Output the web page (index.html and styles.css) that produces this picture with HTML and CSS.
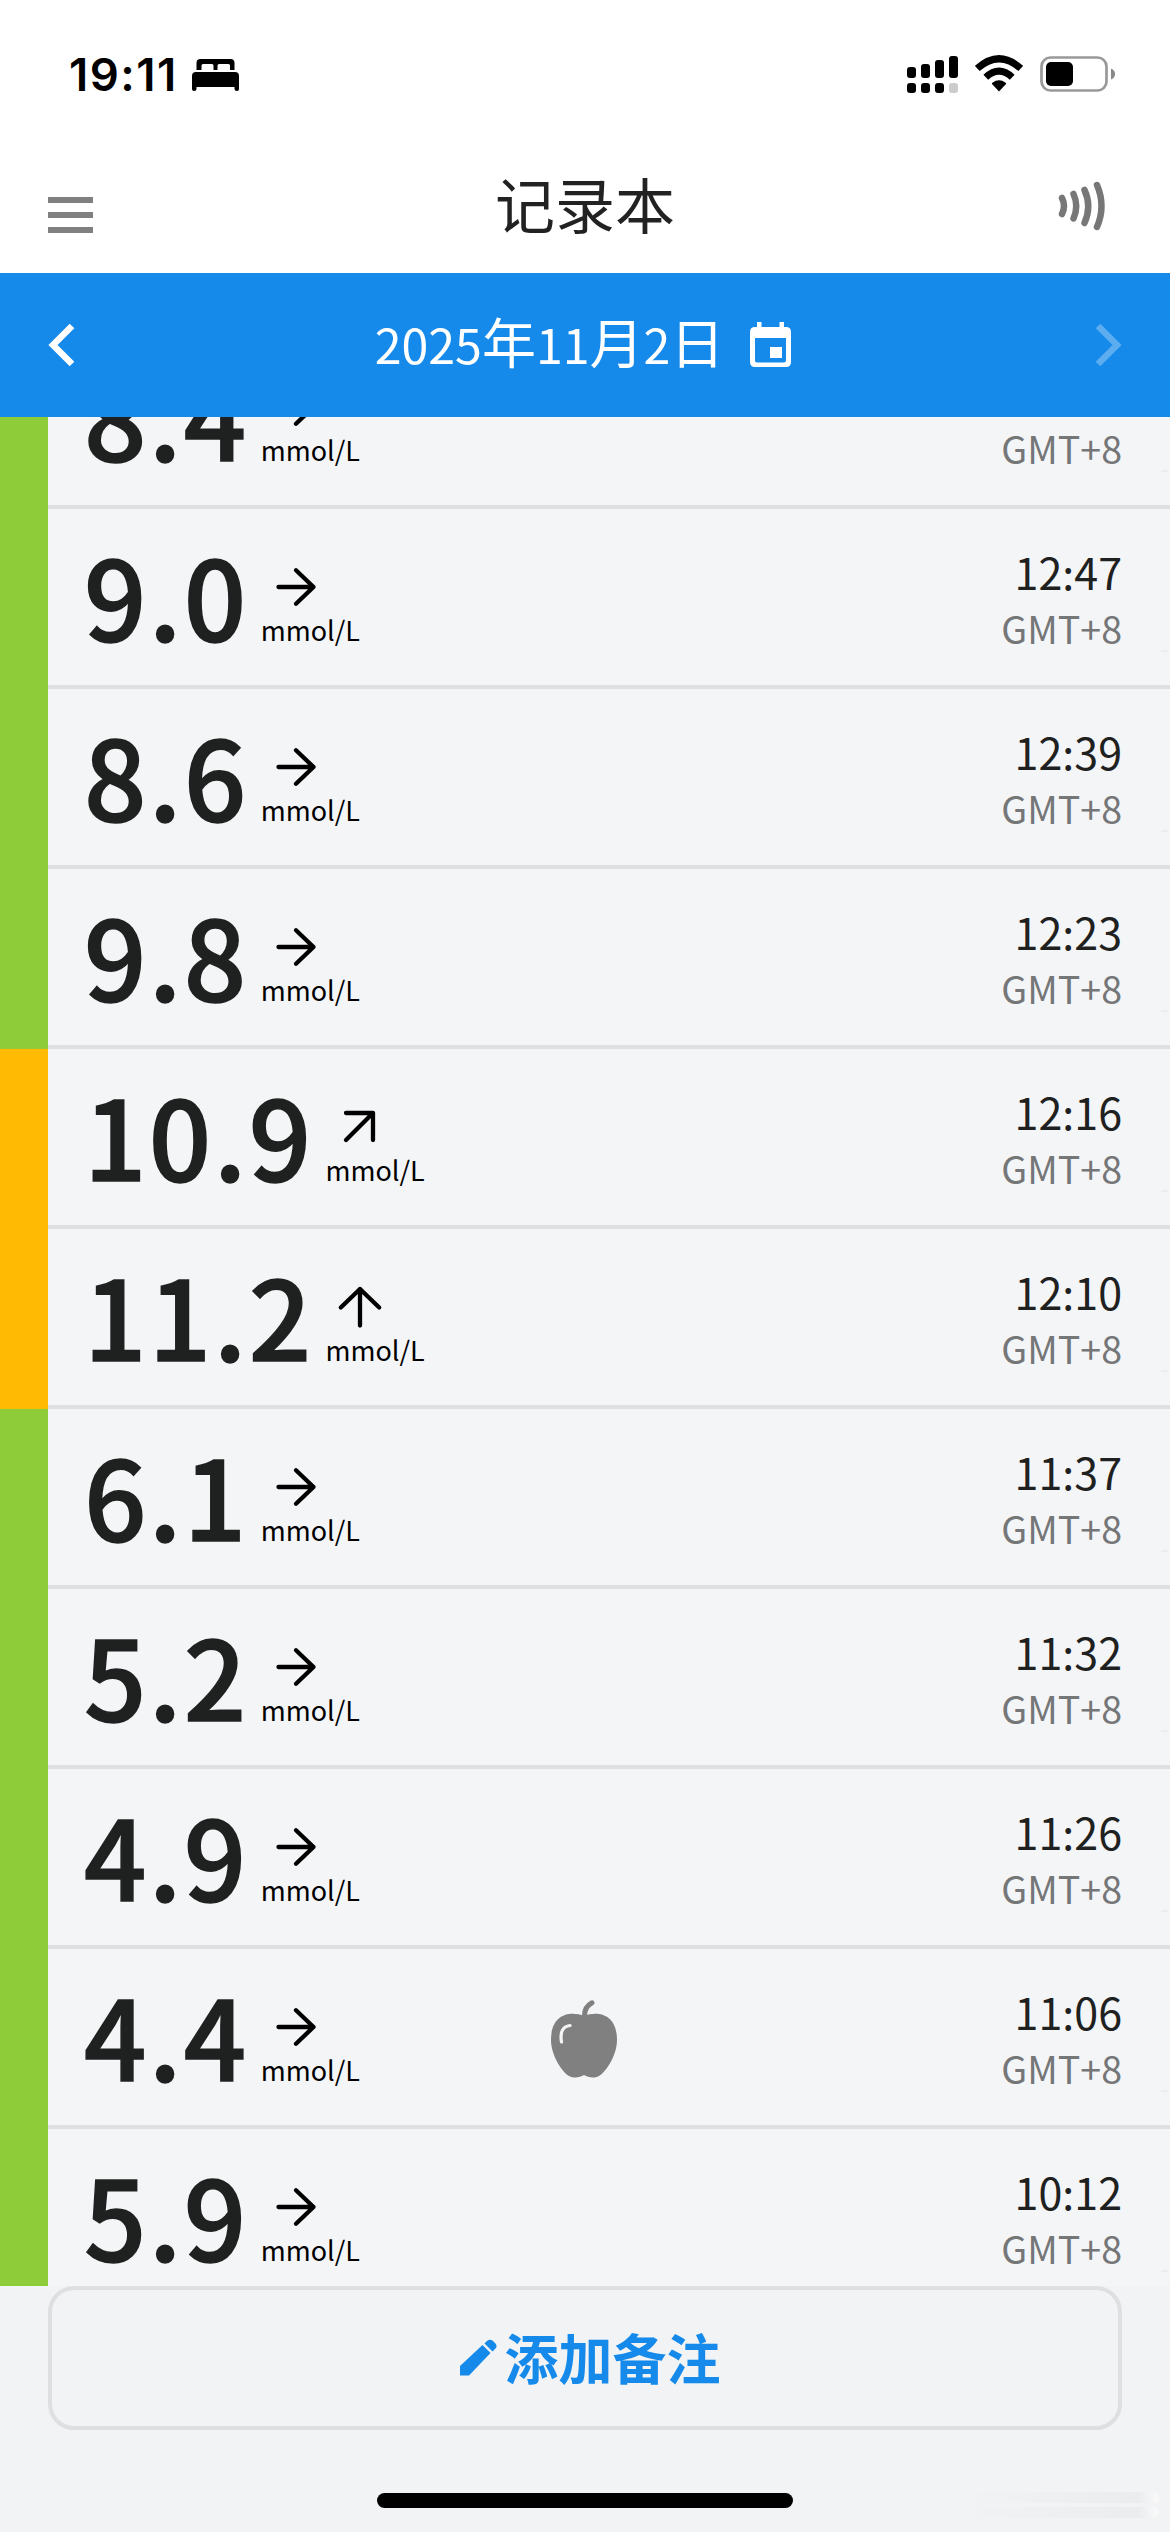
FILE: index.html
```html
<!DOCTYPE html>
<html lang="zh-CN">
<head>
<meta charset="utf-8">
<title>记录本</title>
<link rel="stylesheet" href="styles.css">
</head>
<body>
<svg class="defs" width="0" height="0">
  <symbol id="right" viewBox="0 0 48 48"><path d="M6.500 24H41.500M24 7.200L41.500 24L24 40.800"/></symbol>
  <symbol id="diag" viewBox="0 0 48 48"><path d="M10 10H37V37M37 10L10 37"/></symbol>
  <symbol id="up" viewBox="0 0 48 48"><path d="M24 42.5V6M4.800 24.500L24 6L43.200 24.500"/></symbol>
</svg>
<div class="screen">
  <div class="status">
    <span class="clock">19:11</span>
    <svg class="bed" width="48" height="34" viewBox="0 0 48 34"><path d="M4.500 12V5Q4.500 1 8.500 1H38.500Q42.500 1 42.500 5V12H38V7.500Q38 6 36.500 6H27Q25.500 6 25.500 7.500V12H21.500V7.500Q21.500 6 20 6H11Q9.500 6 9.500 7.500V12ZM0 18Q0 14 4 14H43Q47 14 47 18V31Q47 33 45 33Q42.500 33 42.500 31V29H4.500V31Q4.500 33 2 33Q0 33 0 31Z"/></svg>
    <div class="status-right">
      <svg width="52" height="38" viewBox="0 0 52 38"><g><rect x="0" y="11" width="9" height="11" rx="3"/><rect x="14" y="8" width="9" height="14" rx="3"/><rect x="28" y="4" width="9" height="18" rx="3"/><rect x="42" y="0" width="9" height="22" rx="3"/><rect x="0" y="27" width="9" height="10" rx="3"/><rect x="14" y="27" width="9" height="10" rx="3"/><rect x="28" y="27" width="9" height="10" rx="3"/><rect x="42" y="27" width="9" height="10" rx="3" fill="#ccc"/></g></svg>
      <svg class="wifi" width="48" height="37" viewBox="0 0 48 37"><path d="M24 36.500L17 29Q16.600 28.300 17.400 27.700Q24 23 30.600 27.700Q31.400 28.300 31 29Z"/><path d="M10.800 22.200Q24 10 37.200 22.200" class="arc"/><path d="M2.300 13.500Q24 -6 45.700 13.500" class="arc"/></svg>
      <svg class="battery" width="76" height="36" viewBox="0 0 76 36"><rect x="1.500" y="1.500" width="65" height="33" rx="9" fill="none" stroke="#999" stroke-width="2.700"/><rect x="6" y="6" width="27" height="24" rx="5"/><path d="M71 12.500Q75 14 75 18T71 23.500Z" fill="#888"/></svg>
    </div>
  </div>
  <header class="header">
    <div class="menu"><i></i><i></i><i></i></div>
    <h1>记录本</h1>
    <svg class="nfc" width="48" height="50" viewBox="0 0 48 50"><path d="M4 17Q8 25 4 33M15.500 13Q21 25 15.500 37.500M26.500 9Q34 25 26.500 42M39 4Q48 25 39 46"/></svg>
  </header>
  <nav class="datebar">
    <svg width="27" height="44" viewBox="0 0 27 44"><path d="M24 3L5 22L24 41"/></svg>
    <div class="date"><span>2025<b>年</b>11<b>月</b>2<b>日</b></span>
      <svg width="41" height="46" viewBox="0 0 41 46"><path fill-rule="evenodd" d="M7 0H11.500V5H29.500V0H34V5H36Q41 5 41 10V40Q41 45 36 45H5Q0 45 0 40V10Q0 5 5 5H7ZM5 16V38.500Q5 40.500 7 40.500H34Q36 40.500 36 38.500V16ZM20 25H32V36H20Z"/></svg>
    </div>
    <svg class="off" width="27" height="44" viewBox="0 0 27 44"><path d="M3 3L22 22L3 41"/></svg>
  </nav>
  <main class="list">
    <div class="rows">
    <div class="row"><div class="value">8.4</div><div class="unit"><svg><use href="#right"/></svg><span>mmol/L</span></div><div class="time"><span>GMT+8</span></div></div>
    <div class="row"><div class="value">9.0</div><div class="unit"><svg><use href="#right"/></svg><span>mmol/L</span></div><div class="time"><b>12:47</b><span>GMT+8</span></div></div>
    <div class="row"><div class="value">8.6</div><div class="unit"><svg><use href="#right"/></svg><span>mmol/L</span></div><div class="time"><b>12:39</b><span>GMT+8</span></div></div>
    <div class="row"><div class="value">9.8</div><div class="unit"><svg><use href="#right"/></svg><span>mmol/L</span></div><div class="time"><b>12:23</b><span>GMT+8</span></div></div>
    <div class="row high"><div class="value">10.9</div><div class="unit"><svg><use href="#diag"/></svg><span>mmol/L</span></div><div class="time"><b>12:16</b><span>GMT+8</span></div></div>
    <div class="row high"><div class="value">11.2</div><div class="unit"><svg><use href="#up"/></svg><span>mmol/L</span></div><div class="time"><b>12:10</b><span>GMT+8</span></div></div>
    <div class="row"><div class="value">6.1</div><div class="unit"><svg><use href="#right"/></svg><span>mmol/L</span></div><div class="time"><b>11:37</b><span>GMT+8</span></div></div>
    <div class="row"><div class="value">5.2</div><div class="unit"><svg><use href="#right"/></svg><span>mmol/L</span></div><div class="time"><b>11:32</b><span>GMT+8</span></div></div>
    <div class="row"><div class="value">4.9</div><div class="unit"><svg><use href="#right"/></svg><span>mmol/L</span></div><div class="time"><b>11:26</b><span>GMT+8</span></div></div>
    <div class="row"><div class="value">4.4</div><div class="unit"><svg><use href="#right"/></svg><span>mmol/L</span></div>
      <svg class="apple" width="68" height="80" viewBox="0 0 68 80"><path d="M33 16C20 11 0 13 0 40C0 56 12 73 18 76C24 79 29 77 33 75C37 77 42 79 48 76C54 73 66 56 66 40C66 13 46 11 33 16Z" fill="#808080"/><path d="M33.500 17Q33 7 41 2.800" fill="none" stroke="#808080" stroke-width="5" stroke-linecap="round"/><path d="M10.500 42Q8 27 19 25.500" fill="none" stroke="#f4f5f7" stroke-width="3.200" stroke-linecap="round"/></svg>
      <div class="time"><b>11:06</b><span>GMT+8</span></div></div>
    <div class="row"><div class="value">5.9</div><div class="unit"><svg><use href="#right"/></svg><span>mmol/L</span></div><div class="time"><b>10:12</b><span>GMT+8</span></div></div>
    </div>
  </main>
  <footer class="footer">
    <button class="add"><svg width="37" height="37" viewBox="0 0 37 37"><path d="M0 27L22.500 6L30.500 14L9 36.500H0ZM24.500 4.500Q29 -1.500 33 2Q38.500 6.500 35.500 9.500L32.500 12.500Z"/></svg><span>添加备注</span></button>
    <div class="home"></div>
    <div class="streaks"><i></i><i></i></div>
  </footer>
</div>
</body>
</html>
```
FILE: styles.css
```css
* { box-sizing: border-box; }
body { margin: 0; font-family: "Noto Sans CJK SC", sans-serif; background: #fff; color: #1f2120; }
b, i { font-weight: inherit; font-style: normal; }
.defs { position: absolute; }
.screen { width: 1170px; height: 2532px; display: flex; flex-direction: column; overflow: hidden; }

.status { height: 150px; display: flex; padding-left: 69px; color: #000; }
.clock { font: 600 45.500px/54px Inter, sans-serif; letter-spacing: 1.500px; margin-top: 48px; width: 123px; white-space: nowrap; }
.bed { margin-top: 58px; }
.status-right { margin-left: auto; padding-right: 54px; display: flex; align-items: flex-start; padding-top: 56px; }
.wifi { margin: -1px 17px 0 16px; }
.battery { display: block; }
.arc { fill: none; stroke: #000; stroke-width: 7; }

.header { height: 123px; display: flex; justify-content: space-between; padding: 0 64px 0 48px; }
.menu { display: flex; flex-direction: column; gap: 9px; padding-top: 47px; width: 64px; }
.menu i { width: 45px; height: 6px; background: #808080; }
.header h1 { margin: 8px 0 0; font-size: 60px; line-height: 90px; font-weight: 400; color: #222; }
.nfc { margin-top: 31px; fill: none; stroke: #777; stroke-width: 6.500; stroke-linecap: round; }

.datebar { height: 144px; background: #158aea; color: #fff; display: flex; justify-content: space-between; align-items: center; padding: 0 48px; }
.datebar > svg { fill: none; stroke: #fff; stroke-width: 6.500; }
.datebar .off { stroke: #5badf0; }
.date { display: flex; align-items: center; gap: 26px; font-size: 48.300px; line-height: 80px; margin-top: -6px; padding-right: 4px; }
.date b { font-size: 54px; line-height: 80px; }
.date svg { fill: #fff; margin-top: 6px; }

.list { height: 1869px; overflow: hidden; background: #f4f5f7; }
.rows { margin-top: -88px; }
.row { position: relative; height: 180px; border-left: 48px solid #8fcc3a; display: flex; padding: 0 48px 0 36px; background: linear-gradient(#dddfe1, #dddfe1) bottom / 100% 4px no-repeat; }
.row.high { border-left-color: #ffba03; }
.row::after { content: ""; position: absolute; right: 2px; top: 141px; width: 7px; height: 2px; background: #eaecee; }
.value { font-size: 109.500px; font-weight: 500; line-height: 169px; letter-spacing: 2.400px; -webkit-text-stroke: 1.500px #1f2120; }
.unit { padding: 54px 0 0 12px; display: flex; flex-direction: column; color: #000; font-size: 27px; line-height: 38px; }
.unit svg { width: 48px; height: 48px; margin: 0 0 0 11px; fill: none; stroke: #000; stroke-width: 4.300; stroke-linecap: round; stroke-linejoin: round; }
.time { margin-left: auto; height: 149px; display: flex; flex-direction: column; justify-content: flex-end; align-items: flex-end; }
.time b { font-size: 43px; line-height: 54px; }
.time span { font-size: 37.600px; line-height: 60px; color: #757677; }
.apple { margin: 51px 0 0 191px; }

.footer { flex: 1; position: relative; background: #f2f3f5; display: flex; flex-direction: column; align-items: center; }
.add { width: 1074px; height: 144px; border: 4px solid #dddfe1; border-radius: 26px; background: #f2f3f5; display: flex; align-items: center; justify-content: center; gap: 8px; padding: 0 0 2px 10px; font: 700 54px/80px "Noto Sans CJK SC", sans-serif; color: #158aea; }
.add svg { fill: #158aea; }
.home { margin-top: 63px; width: 416px; height: 15px; border-radius: 8px; background: #000; }
.streaks { position: absolute; right: 11px; bottom: 14px; width: 200px; display: grid; gap: 4px; }
.streaks i { height: 11px; border-radius: 0 6px 6px 0; background: linear-gradient(90deg, #f2f3f500, #ebecee 90%, #fafafa); }
```
